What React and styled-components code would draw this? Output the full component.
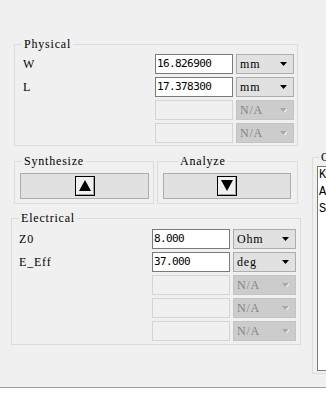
import React from 'react';
import styled, { createGlobalStyle } from 'styled-components';

const Global = createGlobalStyle`
  html, body { margin: 0; padding: 0; background: #ffffff; }
  body { font-family: "Liberation Serif", serif; color: #000; }
`;

const Window = styled.div`
  width: 326px;
  height: 402px;
  background: #ffffff;
  overflow: hidden;
`;

const Main = styled.div`
  height: 387px;
  background: #f0f0f0;
  border-bottom: 1px solid #a0a0a0;
  display: flex;
  align-items: flex-start;
  overflow: hidden;
`;

const LeftCol = styled.div`
  flex: 0 0 290px;
  margin-left: 11px;
  padding-top: 44px;
  display: flex;
  flex-direction: column;
`;

const Group = styled.div`
  position: relative;
  box-sizing: border-box;
  flex: 0 0 auto;
  border: 1px solid #dcdcdc;
  width: ${p => p.$w}px;
  height: ${p => p.$h}px;
  margin: ${p => p.$m || '0'};
  padding: ${p => p.$pad || '0'};
  display: flex;
  flex-direction: column;
`;

const GroupTitle = styled.span`
  position: absolute;
  top: -7px;
  left: ${p => p.$left ?? 7}px;
  padding: 0 2px;
  background: #f0f0f0;
  font: 12px/12px "Liberation Serif", serif;
  letter-spacing: 0.8px;
  white-space: nowrap;
`;

const Rows = styled.div`
  display: flex;
  flex-direction: column;
  gap: 3px;
`;

const Row = styled.div`
  display: flex;
  align-items: center;
  height: 20px;
  gap: 3px;
`;

const Label = styled.span`
  flex: 1;
  font: 12px/20px "Liberation Serif", serif;
  letter-spacing: 0.8px;
  white-space: nowrap;
`;

const Field = styled.div`
  box-sizing: border-box;
  flex: 0 0 ${p => p.$w}px;
  height: 20px;
  border: 1px solid ${p => (p.$disabled ? '#d4d4d4' : '#7a7a7a')};
  background: ${p => (p.$disabled ? '#f0f0f0' : '#ffffff')};
  padding-left: 1px;
  font: 11px/18px "DejaVu Sans Mono", monospace;
  letter-spacing: -0.6px;
  white-space: nowrap;
  overflow: hidden;
`;

const Select = styled.div`
  box-sizing: border-box;
  flex: 0 0 ${p => p.$w}px;
  height: 20px;
  display: flex;
  align-items: center;
  justify-content: space-between;
  padding: 0 6px 0 3px;
  border: 1px solid ${p => (p.$disabled ? '#c4c4c4' : '#adadad')};
  background: ${p => (p.$disabled ? '#cccccc' : '#e1e1e1')};
  color: ${p => (p.$disabled ? '#838383' : '#000000')};
  font: 12px/18px "Liberation Serif", serif;
  letter-spacing: 0.8px;
`;

const ButtonRow = styled.div`
  display: flex;
  gap: 3px;
  margin: 15px 0 0 3px;
`;

const ActionButton = styled.div`
  flex: 1;
  height: 26px;
  box-sizing: border-box;
  border: 1px solid #adadad;
  background: #e1e1e1;
  display: flex;
  align-items: center;
  justify-content: center;
`;

const OutputBox = styled.div`
  flex: 1;
  border: 1px solid #7a7a7a;
  background: #ffffff;
  padding: 0 0 0 1px;
  font: 12px/17px "Liberation Mono", monospace;
  letter-spacing: -1px;
  white-space: nowrap;
  overflow: hidden;
`;

const Arrow = ({ disabled }) => (
  <svg width="7" height="4" viewBox="0 0 7 4">
    <polygon points="0,0 7,0 3.5,4" fill={disabled ? '#a8a8a8' : '#000'} />
    {disabled && <polygon points="7,0 3.5,4 5,4 7,1.5" fill="#f4f4f4" />}
  </svg>
);

const TriIcon = ({ down }) => (
  <svg width="20" height="20" viewBox="0 0 20 20">
    <rect x="0.5" y="0.5" width="19" height="19" fill="#f0f0f0" stroke="#000" />
    <line x1="1.5" y1="18.5" x2="18.5" y2="18.5" stroke="#a0a0a0" />
    <line x1="18.5" y1="1.5" x2="18.5" y2="18.5" stroke="#a0a0a0" />
    {down ? (
      <polygon points="4,4 16,4 10,15" fill="#000" />
    ) : (
      <polygon points="4,15 16,15 10,4" fill="#000" />
    )}
  </svg>
);

const ParamRow = ({ label, value, unit, fw, sw, disabled }) => (
  <Row>
    <Label>{label}</Label>
    <Field $w={fw} $disabled={disabled}>{value}</Field>
    <Select $w={sw} $disabled={disabled}>
      <span>{unit}</span>
      <Arrow disabled={disabled} />
    </Select>
  </Row>
);

const physical = [
  { label: 'W', value: '16.826900', unit: 'mm' },
  { label: 'L', value: '17.378300', unit: 'mm' },
  { label: '', value: '', unit: 'N/A', disabled: true },
  { label: '', value: '', unit: 'N/A', disabled: true },
];

const electrical = [
  { label: 'Z0', value: '8.000', unit: 'Ohm' },
  { label: 'E_Eff', value: '37.000', unit: 'deg' },
  { label: '', value: '', unit: 'N/A', disabled: true },
  { label: '', value: '', unit: 'N/A', disabled: true },
  { label: '', value: '', unit: 'N/A', disabled: true },
];

export default function App() {
  return (
    <Window>
      <Global />
      <Main>
        <LeftCol>
          <Group $w={284} $h={102} $m="0 0 0 3px" $pad="9px 3px 2px 8px">
            <GroupTitle>Physical</GroupTitle>
            <Rows>
              {physical.map((r, i) => (
                <ParamRow key={i} {...r} fw={78} sw={58} />
              ))}
            </Rows>
          </Group>
          <ButtonRow>
            <Group $w={140} $h={43} $pad="11px 4px 4px 5px">
              <GroupTitle>Synthesize</GroupTitle>
              <ActionButton>
                <TriIcon />
              </ActionButton>
            </Group>
            <Group $w={141} $h={43} $pad="11px 6px 4px 5px">
              <GroupTitle $left={20}>Analyze</GroupTitle>
              <ActionButton>
                <TriIcon down />
              </ActionButton>
            </Group>
          </ButtonRow>
          <Group $w={290} $h={127} $m="14px 0 0 0" $pad="10px 4px 3px 7px">
            <GroupTitle>Electrical</GroupTitle>
            <Rows>
              {electrical.map((r, i) => (
                <ParamRow key={i} {...r} fw={78} sw={63} />
              ))}
            </Rows>
          </Group>
        </LeftCol>
        <Group $w={120} $h={217} $m="157px 0 0 11px" $pad="8px 0 2px 4px">
          <GroupTitle $left={6}>Output</GroupTitle>
          <OutputBox>
            <div>Kv = 0.0</div>
            <div>Attn = 0.0</div>
            <div>Skin = 0.0</div>
          </OutputBox>
        </Group>
      </Main>
    </Window>
  );
}
